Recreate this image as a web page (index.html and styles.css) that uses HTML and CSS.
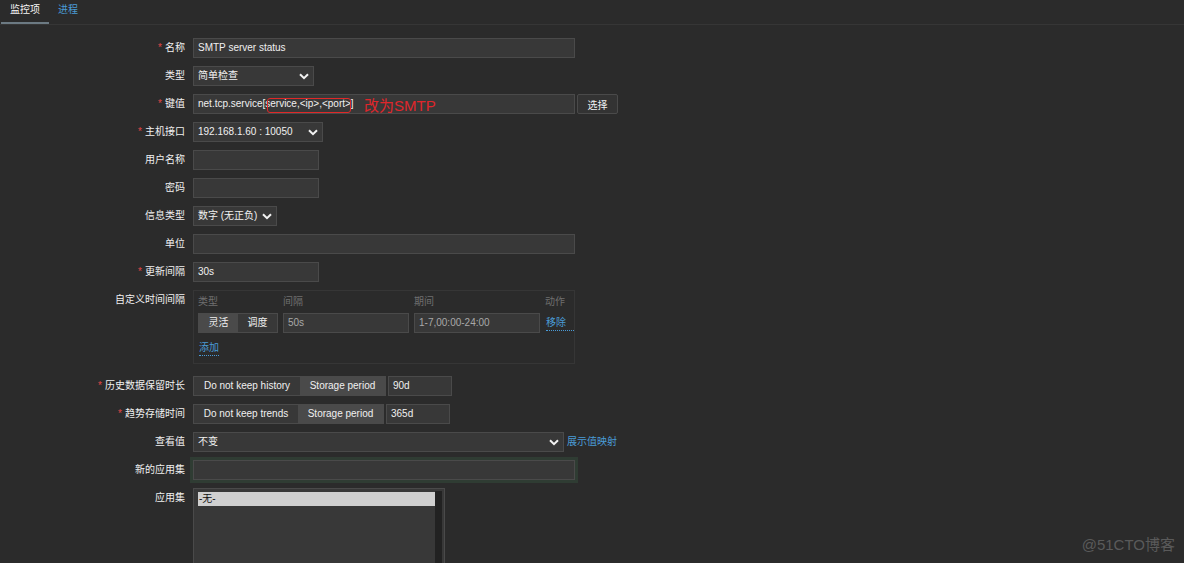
FILE: index.html
```html
<!DOCTYPE html>
<html lang="zh-CN">
<head>
<meta charset="utf-8">
<title>监控项</title>
<link rel="stylesheet" href="styles.css">
</head>
<body>
<nav class="tabs">
  <a class="tab is-active">监控项</a>
  <a class="tab">进程</a>
</nav>

<main class="form">
  <div class="label"><span class="req">*</span>名称</div>
  <div class="field"><div class="input w-wide">SMTP server status</div></div>

  <div class="label">类型</div>
  <div class="field"><div class="select w-type"><span>简单检查</span><svg class="chev" width="10" height="7" viewBox="0 0 10 7"><path d="M1 1.2 L5 5.2 L9 1.2" fill="none" stroke="#f2f2f2" stroke-width="2"/></svg></div></div>

  <div class="label"><span class="req">*</span>键值</div>
  <div class="field key-field">
    <div class="input w-wide">net.tcp.service[service,&lt;ip&gt;,&lt;port&gt;]</div>
    <button class="btn" type="button">选择</button>
    <span class="mark"></span>
    <span class="note">改为SMTP</span>
  </div>

  <div class="label"><span class="req">*</span>主机接口</div>
  <div class="field"><div class="select w-iface"><span>192.168.1.60 : 10050</span><svg class="chev" width="10" height="7" viewBox="0 0 10 7"><path d="M1 1.2 L5 5.2 L9 1.2" fill="none" stroke="#f2f2f2" stroke-width="2"/></svg></div></div>

  <div class="label">用户名称</div>
  <div class="field"><div class="input w-short"></div></div>

  <div class="label">密码</div>
  <div class="field"><div class="input w-short"></div></div>

  <div class="label">信息类型</div>
  <div class="field"><div class="select w-info"><span>数字 (无正负)</span><svg class="chev" width="10" height="7" viewBox="0 0 10 7"><path d="M1 1.2 L5 5.2 L9 1.2" fill="none" stroke="#f2f2f2" stroke-width="2"/></svg></div></div>

  <div class="label">单位</div>
  <div class="field"><div class="input w-wide"></div></div>

  <div class="label"><span class="req">*</span>更新间隔</div>
  <div class="field"><div class="input w-short">30s</div></div>

  <div class="label">自定义时间间隔</div>
  <div class="field">
    <div class="intervals">
      <div class="iv-grid">
        <div class="iv-head">类型</div>
        <div class="iv-head">间隔</div>
        <div class="iv-head">期间</div>
        <div class="iv-head">动作</div>

        <div class="seg iv-seg"><span class="seg-item is-on">灵活</span><span class="seg-item">调度</span></div>
        <div class="input dim">50s</div>
        <div class="input dim">1-7,00:00-24:00</div>
        <a class="link dotted">移除</a>
      </div>
      <a class="link dotted add">添加</a>
    </div>
  </div>

  <div class="label"><span class="req">*</span>历史数据保留时长</div>
  <div class="field">
    <div class="seg"><span class="seg-item s-hist">Do not keep history</span><span class="seg-item is-on s-store">Storage period</span></div>
    <div class="input w-days">90d</div>
  </div>

  <div class="label"><span class="req">*</span>趋势存储时间</div>
  <div class="field">
    <div class="seg"><span class="seg-item s-trend">Do not keep trends</span><span class="seg-item is-on s-store">Storage period</span></div>
    <div class="input w-days">365d</div>
  </div>

  <div class="label">查看值</div>
  <div class="field">
    <div class="select w-value"><span>不变</span><svg class="chev" width="10" height="7" viewBox="0 0 10 7"><path d="M1 1.2 L5 5.2 L9 1.2" fill="none" stroke="#f2f2f2" stroke-width="2"/></svg></div>
    <a class="link">展示值映射</a>
  </div>

  <div class="label">新的应用集</div>
  <div class="field"><div class="input w-wide focus"></div></div>

  <div class="label">应用集</div>
  <div class="field">
    <div class="listbox">
      <div class="opt is-sel">-无-</div>
      <div class="scroll"></div>
    </div>
  </div>
</main>

<div class="watermark">@51CTO博客</div>
</body>
</html>
```

FILE: styles.css
```css
* { box-sizing: border-box; }

html, body {
  margin: 0;
  height: 563px;
  overflow: hidden;
}

body {
  background: #2b2b2b;
  color: #f0f0f0;
  font-family: "Liberation Sans", "Noto Sans CJK SC", sans-serif;
  font-size: 10px;
  position: relative;
}

/* tabs */
.tabs {
  display: flex;
  height: 25px;
  border-bottom: 1px solid #363636;
  padding-left: 1px;
}
.tab {
  height: 24px;
  line-height: 20px;
  padding: 0 9px;
  border-bottom: 2px solid transparent;
  color: #4a9bd6;
}
.tab.is-active {
  color: #f4f4f4;
  border-bottom-color: #6c7a83;
}

/* form grid */
.form {
  display: grid;
  grid-template-columns: 185px 1fr;
  column-gap: 8px;
  row-gap: 8px;
  padding-top: 13px;
}
.label {
  text-align: right;
  line-height: 20px;
  white-space: nowrap;
}
.req {
  color: #e04646;
  margin-right: 3px;
}
.field {
  display: flex;
  align-items: center;
  gap: 2px;
  min-height: 20px;
}

/* controls */
.input, .select {
  height: 20px;
  line-height: 18px;
  background: #383838;
  border: 1px solid #4a4a4a;
  padding: 0 4px;
  color: #f0f0f0;
  white-space: nowrap;
}
.select {
  display: flex;
  align-items: center;
  justify-content: space-between;
  padding-right: 4px;
}
.chev { flex: none; }

.w-wide { width: 382px; }
.w-short { width: 126px; }
.w-type { width: 121px; }
.w-iface { width: 130px; }
.w-info { width: 84px; }
.w-value { width: 371px; }
.w-days { width: 64px; }

.btn {
  height: 20px;
  width: 41px;
  padding: 0;
  background: #333333;
  border: 1px solid #4a4a4a;
  border-radius: 2px;
  color: #f0f0f0;
  font: inherit;
}

.link {
  color: #4a9bd6;
  line-height: 14px;
  margin-left: 1px;
}
.dotted {
  border-bottom: 1px dotted #4a9bd6;
}

/* key annotation */
.key-field { position: relative; }
.mark {
  position: absolute;
  left: 74px;
  top: 4px;
  width: 84px;
  height: 15px;
  border: 1px solid #e02828;
  border-radius: 3px;
}
.note {
  position: absolute;
  left: 171px;
  top: 3px;
  font-size: 15px;
  line-height: 18px;
  color: #e0262b;
  white-space: nowrap;
}

/* custom intervals */
.intervals {
  width: 382px;
  height: 74px;
  border: 1px solid #363636;
  padding: 4px 0 0 4px;
  margin-bottom: 4px;
}
.iv-grid {
  display: grid;
  grid-template-columns: 80px 126px 126px auto;
  column-gap: 5px;
  row-gap: 4px;
  align-items: center;
}
.iv-head {
  color: #6f6f6f;
  line-height: 14px;
}
.input.dim {
  color: #a8a8a8;
}
.add {
  display: inline-block;
  margin-top: 8px;
}

/* segmented */
.seg {
  display: flex;
  height: 20px;
  border: 1px solid #4a4a4a;
  background: #383838;
}
.seg-item {
  display: flex;
  align-items: center;
  justify-content: center;
  line-height: 18px;
  white-space: nowrap;
}
.seg-item.is-on { background: #4a4a4a; }
.iv-seg .seg-item { width: 39px; }
.s-hist { width: 106px; }
.s-trend { width: 104px; }
.s-store { width: 85px; }

/* focus */
.focus {
  box-shadow: 0 0 0 3px #2f3c33;
}

/* listbox */
.listbox {
  position: relative;
  width: 252px;
  height: 100px;
  background: #383838;
  border: 1px solid #4a4a4a;
  padding: 3px 0 0 4px;
  align-self: flex-start;
}
.opt {
  width: 237px;
  height: 14px;
  line-height: 14px;
  padding-left: 1px;
}
.opt.is-sel {
  background: #d0d0d0;
  color: #111111;
}
.scroll {
  position: absolute;
  top: 2px;
  right: 2px;
  bottom: 0;
  width: 7px;
  background: #222222;
}

.watermark {
  position: absolute;
  right: 9px;
  bottom: 9px;
  color: #5a5a5a;
  font-size: 15px;
  line-height: 18px;
}
```
